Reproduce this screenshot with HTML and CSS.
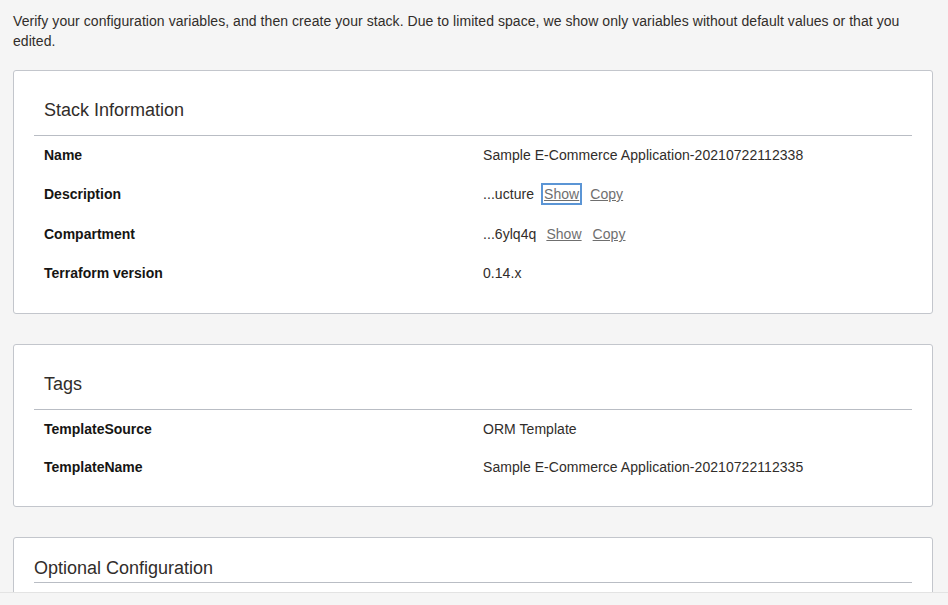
FILE: index.html
```html
<!DOCTYPE html>
<html>
<head>
<meta charset="utf-8">
<link rel="stylesheet" href="styles.css">
</head>
<body>
<div class="page">
  <p class="intro">Verify your configuration variables, and then create your stack. Due to limited space, we show only variables without default values or that you edited.</p>

  <section class="card">
    <h2 class="card-title">Stack Information</h2>
    <div class="rows">
      <div class="row"><div class="label">Name</div><div class="value">Sample E-Commerce Application-20210722112338</div></div>
      <div class="row"><div class="label">Description</div><div class="value"><span>...ucture</span><a class="link focused" href="#">Show</a><a class="link" href="#">Copy</a></div></div>
      <div class="row"><div class="label">Compartment</div><div class="value"><span>...6ylq4q</span><a class="link" href="#">Show</a><a class="link" href="#">Copy</a></div></div>
      <div class="row"><div class="label">Terraform version</div><div class="value">0.14.x</div></div>
    </div>
  </section>

  <section class="card card-tags">
    <h2 class="card-title">Tags</h2>
    <div class="rows">
      <div class="row"><div class="label">TemplateSource</div><div class="value">ORM Template</div></div>
      <div class="row"><div class="label">TemplateName</div><div class="value">Sample E-Commerce Application-20210722112335</div></div>
    </div>
  </section>

  <section class="card card-open">
    <h2 class="card-title card-title-flat">Optional Configuration</h2>
  </section>
</div>
<div class="footer"></div>
</body>
</html>
```

FILE: styles.css
```css
html, body {
  margin: 0;
  padding: 0;
  background: #f5f5f5;
  height: 100%;
  overflow: hidden;
}
body {
  font-family: "Liberation Sans", Arial, Helvetica, sans-serif;
  font-size: 14px;
  color: #161513;
}
.page {
  padding: 11px 15px 0 13px;
}
.intro {
  margin: 0 0 19px 0;
  line-height: 20px;
  color: #312d2a;
  padding-right: 10px;
  letter-spacing: 0.06px;
}
.card {
  background: #fff;
  border: 1px solid #c3c6cc;
  border-radius: 3px;
  padding: 0 20px 30px 20px;
  margin-bottom: 30px;
}
.card-tags {
  padding-bottom: 29px;
}
.card-title {
  margin: 0;
  font-weight: normal;
  font-size: 18px;
  line-height: 24px;
  color: #312d2a;
  padding: 27px 10px 13px 10px;
  border-bottom: 1px solid #b9bdc4;
}
.card-title-flat {
  padding: 18px 0 2px 0;
}
.card-open {
  padding-bottom: 40px;
}
.rows {
  display: flex;
  flex-direction: column;
  gap: 18px;
  padding-top: 9px;
}
.row {
  display: grid;
  grid-template-columns: 1fr 1fr;
  align-items: center;
  line-height: 20px;
  min-height: 20px;
}
.row .label {
  padding-left: 10px;
  font-weight: bold;
}
.row .value {
  padding-left: 10px;
  color: #312d2a;
  display: flex;
  align-items: center;
  letter-spacing: 0.05px;
}
.link {
  color: #6f6f6f;
  text-decoration: underline;
  display: block;
  padding: 0 2px;
  margin-left: 7px;
  line-height: 20px;
  border: 1px solid transparent;
}
.link + .link {
  margin-left: 5px;
}
.link.focused {
  border: 2px solid #5b95d5;
  padding: 0 1px;
  line-height: 18px;
  margin-left: 7px;
}
.footer {
  position: fixed;
  left: 0;
  right: 0;
  bottom: 0;
  height: 12px;
  background: #f5f5f5;
  border-top: 1px solid #e3e3e3;
}
```
